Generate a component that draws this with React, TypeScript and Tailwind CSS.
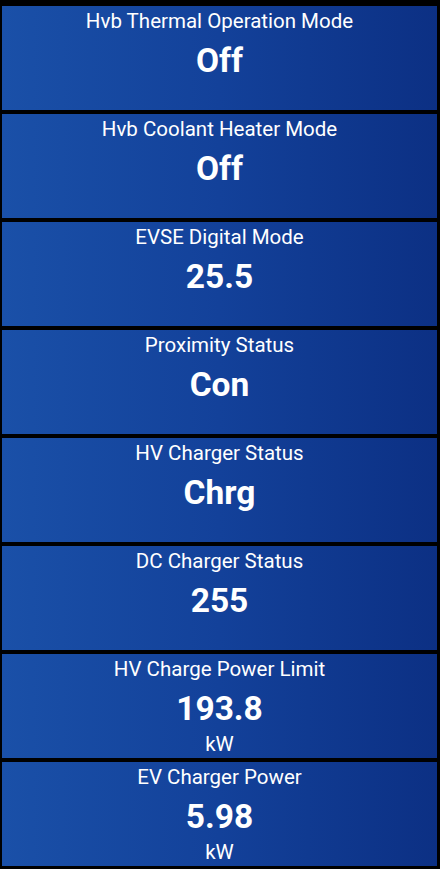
const items = [
  { label: "Hvb Thermal Operation Mode", value: "Off" },
  { label: "Hvb Coolant Heater Mode", value: "Off" },
  { label: "EVSE Digital Mode", value: "25.5" },
  { label: "Proximity Status", value: "Con" },
  { label: "HV Charger Status", value: "Chrg" },
  { label: "DC Charger Status", value: "255" },
  { label: "HV Charge Power Limit", value: "193.8", unit: "kW" },
  { label: "EV Charger Power", value: "5.98", unit: "kW" },
];

export default function App() {
  return (
    <main className="h-[869px] w-[440px] overflow-hidden bg-black pl-[2px] pr-[3px] pt-[6px] font-['Roboto',sans-serif] text-white">
      <div className="flex flex-col gap-1">
        {items.map((item, i) => (
          <div
            key={i}
            className="flex h-[104px] flex-col items-center bg-gradient-to-r from-[#1a50a8] via-[#13419a] to-[#0c3084] pt-[3px]"
          >
            <div className="text-[20.5px] leading-6">{item.label}</div>
            <div className="mt-2 text-[33.5px] font-bold leading-[40px]">{item.value}</div>
            {item.unit && <div className="mt-[3px] text-[20.5px] leading-6">{item.unit}</div>}
          </div>
        ))}
      </div>
    </main>
  );
}
